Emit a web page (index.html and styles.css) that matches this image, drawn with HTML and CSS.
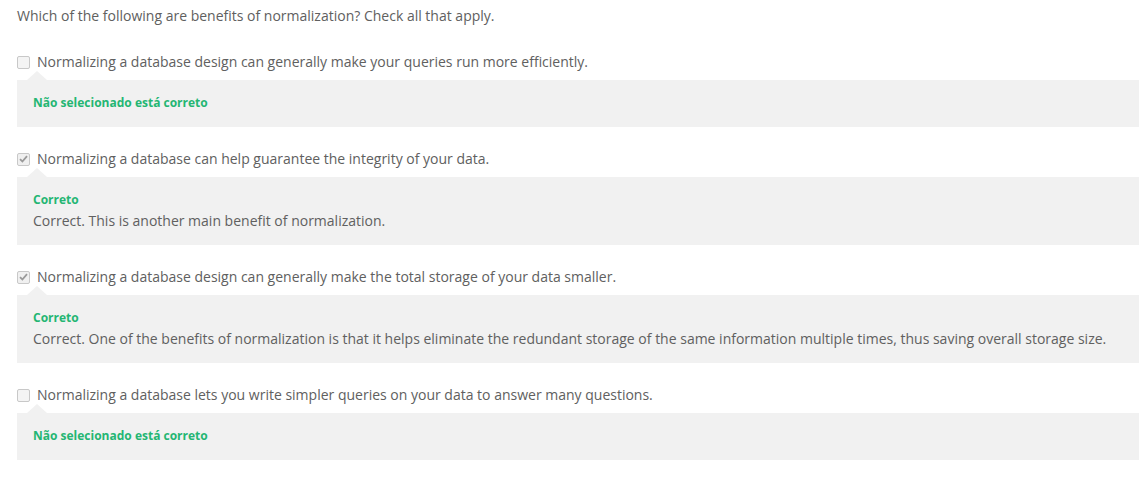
FILE: index.html
```html
<!DOCTYPE html>
<html>
<head>
<meta charset="utf-8">
<link rel="stylesheet" href="styles.css">
</head>
<body>
<div class="quiz">
  <div class="question">Which of the following are benefits of normalization? Check all that apply.</div>

  <div class="option">
    <span class="box"></span>
    <span class="opt-text">Normalizing a database design can generally make your queries run more efficiently.</span>
  </div>
  <div class="feedback">
    <div class="label">Não selecionado está correto</div>
  </div>

  <div class="option">
    <span class="box checked"><svg width="9" height="8" viewBox="0 0 9 8"><path d="M1 4.2 L3.4 6.5 L8 1.2" fill="none" stroke="#9a9a9a" stroke-width="1.8"/></svg></span>
    <span class="opt-text">Normalizing a database can help guarantee the integrity of your data.</span>
  </div>
  <div class="feedback">
    <div class="label">Correto</div>
    <div class="expl">Correct. This is another main benefit of normalization.</div>
  </div>

  <div class="option">
    <span class="box checked"><svg width="9" height="8" viewBox="0 0 9 8"><path d="M1 4.2 L3.4 6.5 L8 1.2" fill="none" stroke="#9a9a9a" stroke-width="1.8"/></svg></span>
    <span class="opt-text">Normalizing a database design can generally make the total storage of your data smaller.</span>
  </div>
  <div class="feedback">
    <div class="label">Correto</div>
    <div class="expl">Correct. One of the benefits of normalization is that it helps eliminate the redundant storage of the same information multiple times, thus saving overall storage size.</div>
  </div>

  <div class="option">
    <span class="box"></span>
    <span class="opt-text">Normalizing a database lets you write simpler queries on your data to answer many questions.</span>
  </div>
  <div class="feedback">
    <div class="label">Não selecionado está correto</div>
  </div>
</div>
</body>
</html>
```

FILE: styles.css
```css
html, body {
  margin: 0;
  padding: 0;
  background: #fff;
}
body {
  font-family: "Open Sans", "Liberation Sans", sans-serif;
  color: #606060;
  font-size: 14px;
}
.quiz {
  padding: 6px 0 20px 17px;
}
.question {
  line-height: 20px;
  margin-bottom: 26px;
}
.option {
  display: flex;
  align-items: center;
  height: 20px;
  margin-bottom: 8px;
}
.box {
  width: 11px;
  height: 11px;
  border: 1px solid #c8c8c8;
  border-radius: 2px;
  background: #f4f4f4;
  margin-right: 7px;
  display: flex;
  align-items: center;
  justify-content: center;
  flex: none;
}
.box.checked {
  background: #f0f0f0;
}
.opt-text {
  font-size: 14px;
  line-height: 20px;
}
.feedback {
  position: relative;
  background: #f1f1f1;
  padding: 14px 16px 15px;
  margin-bottom: 22px;
}
.feedback::before {
  content: "";
  position: absolute;
  left: 10px;
  top: -9px;
  border-left: 10px solid transparent;
  border-right: 10px solid transparent;
  border-bottom: 9px solid #f1f1f1;
}
.label {
  color: #24b673;
  font-weight: 700;
  font-size: 12px;
  line-height: 18px;
}
.expl {
  margin-top: 2px;
  line-height: 20px;
  font-size: 14px;
  margin-bottom: -1px;
}
.feedback:last-child {
  margin-bottom: 0;
}
```
